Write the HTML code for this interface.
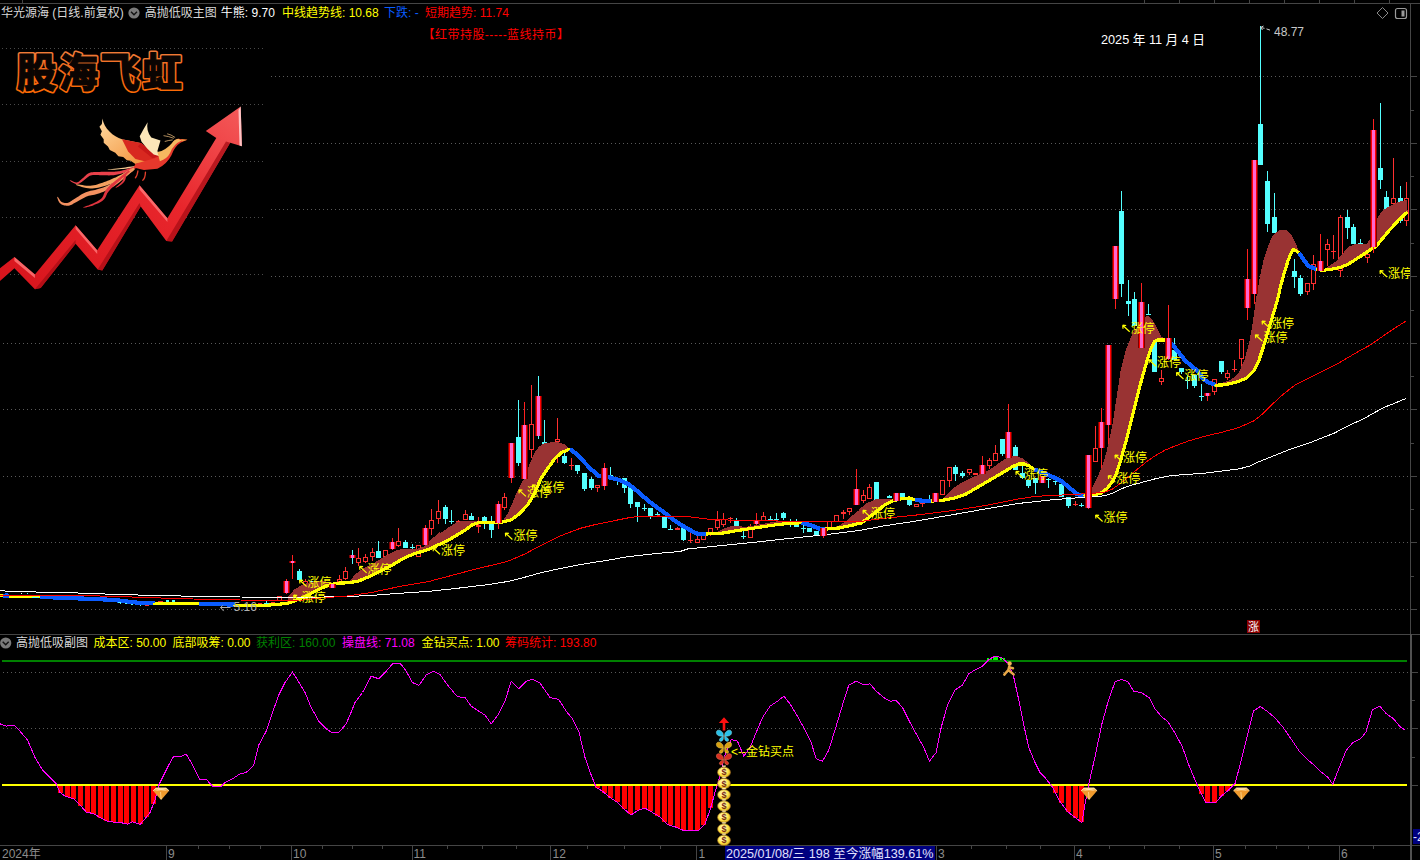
<!DOCTYPE html>
<html><head><meta charset="utf-8"><title>chart</title><style>html,body{margin:0;padding:0;background:#000;width:1420px;height:860px;overflow:hidden}</style></head><body>
<svg width="1420" height="860" viewBox="0 0 1420 860" style="display:block;position:absolute;left:0;top:0">
<defs>
<linearGradient id="pk" x1="0" x2="1" y1="0" y2="0"><stop offset="0" stop-color="#8a0000"/><stop offset=".16" stop-color="#ff0000"/><stop offset=".42" stop-color="#ff66c4"/><stop offset=".58" stop-color="#ff66c4"/><stop offset=".84" stop-color="#ff0000"/><stop offset="1" stop-color="#8a0000"/></linearGradient>
<linearGradient id="og" x1="0" x2="0" y1="0" y2="1"><stop offset="0" stop-color="#f0864a"/><stop offset=".5" stop-color="#f26a1c"/><stop offset="1" stop-color="#ff6a00"/></linearGradient>
<linearGradient id="ar" x1="0" x2="1" y1="1" y2="0"><stop offset="0" stop-color="#d8141c"/><stop offset=".6" stop-color="#e8262c"/><stop offset="1" stop-color="#f45a5a"/></linearGradient>
<linearGradient id="wg" x1="0" x2="1" y1="0" y2="1"><stop offset="0" stop-color="#ffd9a0"/><stop offset="1" stop-color="#f08a30"/></linearGradient>
<radialGradient id="bag" cx=".42" cy=".38" r=".68"><stop offset="0" stop-color="#fffbe6"/><stop offset=".55" stop-color="#ffe84a"/><stop offset="1" stop-color="#d8a010"/></radialGradient>
<linearGradient id="dm" x1="0" x2="0" y1="0" y2="1"><stop offset="0" stop-color="#ffd890"/><stop offset=".3" stop-color="#f0982c"/><stop offset=".8" stop-color="#f0a030"/><stop offset="1" stop-color="#ffd080"/></linearGradient>
</defs>
<rect width="1420" height="860" fill="#000"/>
<g stroke="#5a5a5a" stroke-width="1" stroke-dasharray="1 3" shape-rendering="crispEdges">
<line x1="271" y1="76.5" x2="1409" y2="76.5"/>
<line x1="271" y1="143.5" x2="1409" y2="143.5"/>
<line x1="271" y1="209.5" x2="1409" y2="209.5"/>
<line x1="271" y1="276.5" x2="1409" y2="276.5"/>
<line x1="3" y1="343.5" x2="1409" y2="343.5"/>
<line x1="3" y1="409.5" x2="1409" y2="409.5"/>
<line x1="3" y1="476.5" x2="1409" y2="476.5"/>
<line x1="3" y1="542.5" x2="1409" y2="542.5"/>
<line x1="3" y1="609.5" x2="1409" y2="609.5"/>
<line x1="3" y1="672.5" x2="1409" y2="672.5"/>
<line x1="3" y1="728.5" x2="1409" y2="728.5"/>
<line x1="2" y1="48.5" x2="264" y2="48.5" stroke="#4a4a4a"/>
<line x1="2" y1="104.5" x2="264" y2="104.5" stroke="#4a4a4a"/>
<line x1="2" y1="161.5" x2="264" y2="161.5" stroke="#4a4a4a"/>
<line x1="2" y1="217.5" x2="264" y2="217.5" stroke="#4a4a4a"/>
<line x1="2" y1="274.5" x2="264" y2="274.5" stroke="#4a4a4a"/>
</g>
<g stroke="#454545" stroke-width="1" shape-rendering="crispEdges">
<line x1="0" y1="3.5" x2="1420" y2="3.5"/>
<line x1="0" y1="634.5" x2="1420" y2="634.5"/>
<line x1="0" y1="845.5" x2="1420" y2="845.5"/>
<line x1="1410.5" y1="3" x2="1410.5" y2="634"/>
<line x1="1411" y1="634" x2="1411" y2="860" stroke-width="2" stroke="#505050"/>
<line x1="22.5" y1="0" x2="22.5" y2="3"/>
<line x1="1144.5" y1="0" x2="1144.5" y2="3"/>
<line x1="1179.5" y1="0" x2="1179.5" y2="3"/>
<line x1="1214.5" y1="0" x2="1214.5" y2="3"/>
<line x1="1249.5" y1="0" x2="1249.5" y2="3"/>
<line x1="1284.5" y1="0" x2="1284.5" y2="3"/>
<line x1="1319.5" y1="0" x2="1319.5" y2="3"/>
<line x1="1354.5" y1="0" x2="1354.5" y2="3"/>
<line x1="1389.5" y1="0" x2="1389.5" y2="3"/>
<line x1="1411" y1="76.5" x2="1417" y2="76.5"/>
<line x1="1411" y1="110.5" x2="1414" y2="110.5"/>
<line x1="1411" y1="143.5" x2="1417" y2="143.5"/>
<line x1="1411" y1="176.5" x2="1414" y2="176.5"/>
<line x1="1411" y1="209.5" x2="1417" y2="209.5"/>
<line x1="1411" y1="243.5" x2="1414" y2="243.5"/>
<line x1="1411" y1="276.5" x2="1417" y2="276.5"/>
<line x1="1411" y1="310.5" x2="1414" y2="310.5"/>
<line x1="1411" y1="343.5" x2="1417" y2="343.5"/>
<line x1="1411" y1="376.5" x2="1414" y2="376.5"/>
<line x1="1411" y1="409.5" x2="1417" y2="409.5"/>
<line x1="1411" y1="443.5" x2="1414" y2="443.5"/>
<line x1="1411" y1="476.5" x2="1417" y2="476.5"/>
<line x1="1411" y1="509.5" x2="1414" y2="509.5"/>
<line x1="1411" y1="542.5" x2="1417" y2="542.5"/>
<line x1="1411" y1="576.5" x2="1414" y2="576.5"/>
<line x1="1411" y1="609.5" x2="1417" y2="609.5"/>
<line x1="1412" y1="672.5" x2="1418" y2="672.5"/>
<line x1="1412" y1="700.5" x2="1415" y2="700.5"/>
<line x1="1412" y1="728.5" x2="1418" y2="728.5"/>
<line x1="1412" y1="757.5" x2="1415" y2="757.5"/>
<line x1="1412" y1="785.5" x2="1418" y2="785.5"/>
<line x1="166.5" y1="846" x2="166.5" y2="860"/>
<line x1="291.5" y1="846" x2="291.5" y2="860"/>
<line x1="412.5" y1="846" x2="412.5" y2="860"/>
<line x1="550.5" y1="846" x2="550.5" y2="860"/>
<line x1="696.5" y1="846" x2="696.5" y2="860"/>
<line x1="1074.5" y1="846" x2="1074.5" y2="860"/>
<line x1="1213.5" y1="846" x2="1213.5" y2="860"/>
<line x1="1339.5" y1="846" x2="1339.5" y2="860"/>
<line x1="936.5" y1="846" x2="936.5" y2="860"/>
<line x1="198.5" y1="846" x2="198.5" y2="849"/>
<line x1="229.5" y1="846" x2="229.5" y2="849"/>
<line x1="260.5" y1="846" x2="260.5" y2="849"/>
<line x1="322.5" y1="846" x2="322.5" y2="849"/>
<line x1="352.5" y1="846" x2="352.5" y2="849"/>
<line x1="382.5" y1="846" x2="382.5" y2="849"/>
<line x1="447.5" y1="846" x2="447.5" y2="849"/>
<line x1="482.5" y1="846" x2="482.5" y2="849"/>
<line x1="516.5" y1="846" x2="516.5" y2="849"/>
<line x1="587.5" y1="846" x2="587.5" y2="849"/>
<line x1="624.5" y1="846" x2="624.5" y2="849"/>
<line x1="660.5" y1="846" x2="660.5" y2="849"/>
<line x1="971.5" y1="846" x2="971.5" y2="849"/>
<line x1="1006.5" y1="846" x2="1006.5" y2="849"/>
<line x1="1040.5" y1="846" x2="1040.5" y2="849"/>
<line x1="1109.5" y1="846" x2="1109.5" y2="849"/>
<line x1="1144.5" y1="846" x2="1144.5" y2="849"/>
<line x1="1179.5" y1="846" x2="1179.5" y2="849"/>
<line x1="1245.5" y1="846" x2="1245.5" y2="849"/>
<line x1="1276.5" y1="846" x2="1276.5" y2="849"/>
<line x1="1308.5" y1="846" x2="1308.5" y2="849"/>
<line x1="1373.5" y1="846" x2="1373.5" y2="849"/>
</g>
<g shape-rendering="crispEdges">
<rect x="279" y="596" width="1" height="0" fill="#ff3030"/><rect x="279" y="601" width="1" height="0" fill="#ff3030"/><rect x="277.5" y="596.5" width="4" height="4" fill="#000" stroke="#ff3030" stroke-width="1"/>
<rect x="299" y="569" width="1" height="12" fill="#54ffff"/><rect x="297" y="571" width="5" height="9" fill="#54ffff"/>
<rect x="305" y="579" width="1" height="2" fill="#ff3030"/><rect x="305" y="585" width="1" height="0" fill="#ff3030"/><rect x="303.5" y="581.5" width="4" height="3" fill="#000" stroke="#ff3030" stroke-width="1"/>
<rect x="312" y="581" width="1" height="2" fill="#54ffff"/><rect x="310" y="581" width="5" height="2" fill="#54ffff"/>
<rect x="339" y="575" width="1" height="4" fill="#ff3030"/><rect x="339" y="582" width="1" height="0" fill="#ff3030"/><rect x="337.5" y="579.5" width="4" height="2" fill="#000" stroke="#ff3030" stroke-width="1"/>
<rect x="345" y="567" width="1" height="4" fill="#ff3030"/><rect x="345" y="579" width="1" height="1" fill="#ff3030"/><rect x="343.5" y="571.5" width="4" height="7" fill="#000" stroke="#ff3030" stroke-width="1"/>
<rect x="358" y="548" width="1" height="10" fill="#ff3030"/><rect x="358" y="563" width="1" height="3" fill="#ff3030"/><rect x="356.5" y="558.5" width="4" height="4" fill="#000" stroke="#ff3030" stroke-width="1"/>
<rect x="365" y="554" width="1" height="3" fill="#ff3030"/><rect x="365" y="562" width="1" height="1" fill="#ff3030"/><rect x="363.5" y="557.5" width="4" height="4" fill="#000" stroke="#ff3030" stroke-width="1"/>
<rect x="372" y="548" width="1" height="4" fill="#ff3030"/><rect x="372" y="557" width="1" height="4" fill="#ff3030"/><rect x="370.5" y="552.5" width="4" height="4" fill="#000" stroke="#ff3030" stroke-width="1"/>
<rect x="378" y="541" width="1" height="17" fill="#54ffff"/><rect x="376" y="551" width="5" height="7" fill="#54ffff"/>
<rect x="385" y="550" width="1" height="0" fill="#ff3030"/><rect x="385" y="557" width="1" height="0" fill="#ff3030"/><rect x="383.5" y="550.5" width="4" height="6" fill="#000" stroke="#ff3030" stroke-width="1"/>
<rect x="398" y="528" width="1" height="13" fill="#ff3030"/><rect x="398" y="546" width="1" height="1" fill="#ff3030"/><rect x="396.5" y="541.5" width="4" height="4" fill="#000" stroke="#ff3030" stroke-width="1"/>
<rect x="405" y="540" width="1" height="8" fill="#54ffff"/><rect x="403" y="542" width="5" height="6" fill="#54ffff"/>
<rect x="412" y="544" width="1" height="5" fill="#54ffff"/><rect x="410" y="547" width="5" height="1" fill="#54ffff"/>
<rect x="418" y="545" width="1" height="0" fill="#ff3030"/><rect x="418" y="557" width="1" height="0" fill="#ff3030"/><rect x="416.5" y="545.5" width="4" height="11" fill="#000" stroke="#ff3030" stroke-width="1"/>
<rect x="431" y="509" width="1" height="11" fill="#ff3030"/><rect x="431" y="529" width="1" height="6" fill="#ff3030"/><rect x="429.5" y="520.5" width="4" height="8" fill="#000" stroke="#ff3030" stroke-width="1"/>
<rect x="438" y="500" width="1" height="11" fill="#ff3030"/><rect x="438" y="519" width="1" height="5" fill="#ff3030"/><rect x="436.5" y="511.5" width="4" height="7" fill="#000" stroke="#ff3030" stroke-width="1"/>
<rect x="445" y="505" width="1" height="19" fill="#54ffff"/><rect x="443" y="507" width="5" height="12" fill="#54ffff"/>
<rect x="451" y="510" width="1" height="14" fill="#54ffff"/><rect x="449" y="521" width="5" height="1" fill="#54ffff"/>
<rect x="458" y="520" width="1" height="1" fill="#ff3030"/><rect x="458" y="522" width="1" height="1" fill="#ff3030"/><rect x="456" y="521" width="5" height="1" fill="#ff3030"/>
<rect x="465" y="510" width="1" height="4" fill="#ff3030"/><rect x="465" y="520" width="1" height="0" fill="#ff3030"/><rect x="463.5" y="514.5" width="4" height="5" fill="#000" stroke="#ff3030" stroke-width="1"/>
<rect x="471" y="513" width="1" height="7" fill="#54ffff"/><rect x="469" y="516" width="5" height="4" fill="#54ffff"/>
<rect x="478" y="517" width="1" height="8" fill="#ff3030"/><rect x="478" y="527" width="1" height="6" fill="#ff3030"/><rect x="476" y="525" width="5" height="2" fill="#ff3030"/>
<rect x="484" y="516" width="1" height="13" fill="#54ffff"/><rect x="482" y="517" width="5" height="5" fill="#54ffff"/>
<rect x="491" y="516" width="1" height="22" fill="#54ffff"/><rect x="489" y="522" width="5" height="8" fill="#54ffff"/>
<rect x="504" y="493" width="1" height="4" fill="#ff3030"/><rect x="504" y="508" width="1" height="2" fill="#ff3030"/><rect x="502.5" y="497.5" width="4" height="10" fill="#000" stroke="#ff3030" stroke-width="1"/>
<rect x="518" y="400" width="1" height="66" fill="#54ffff"/><rect x="516" y="437" width="5" height="26" fill="#54ffff"/>
<rect x="531" y="385" width="1" height="39" fill="#ff3030"/><rect x="531" y="450" width="1" height="8" fill="#ff3030"/><rect x="529.5" y="424.5" width="4" height="25" fill="#000" stroke="#ff3030" stroke-width="1"/>
<rect x="544" y="420" width="1" height="24" fill="#54ffff"/><rect x="542" y="442" width="5" height="2" fill="#54ffff"/>
<rect x="557" y="418" width="1" height="21" fill="#ff3030"/><rect x="557" y="442" width="1" height="21" fill="#ff3030"/><rect x="555.5" y="439.5" width="4" height="2" fill="#000" stroke="#ff3030" stroke-width="1"/>
<rect x="564" y="452" width="1" height="12" fill="#54ffff"/><rect x="562" y="456" width="5" height="7" fill="#54ffff"/>
<rect x="571" y="458" width="1" height="7" fill="#ff3030"/><rect x="571" y="466" width="1" height="4" fill="#ff3030"/><rect x="569" y="465" width="5" height="1" fill="#ff3030"/>
<rect x="577" y="465" width="1" height="9" fill="#54ffff"/><rect x="575" y="465" width="5" height="6" fill="#54ffff"/>
<rect x="584" y="473" width="1" height="18" fill="#54ffff"/><rect x="582" y="473" width="5" height="16" fill="#54ffff"/>
<rect x="591" y="477" width="1" height="13" fill="#54ffff"/><rect x="589" y="479" width="5" height="9" fill="#54ffff"/>
<rect x="597" y="485" width="1" height="0" fill="#ff3030"/><rect x="597" y="488" width="1" height="4" fill="#ff3030"/><rect x="595.5" y="485.5" width="4" height="2" fill="#000" stroke="#ff3030" stroke-width="1"/>
<rect x="610" y="467" width="1" height="10" fill="#54ffff"/><rect x="608" y="475" width="5" height="1" fill="#54ffff"/>
<rect x="617" y="477" width="1" height="8" fill="#54ffff"/><rect x="615" y="478" width="5" height="3" fill="#54ffff"/>
<rect x="624" y="478" width="1" height="15" fill="#54ffff"/><rect x="622" y="478" width="5" height="10" fill="#54ffff"/>
<rect x="630" y="487" width="1" height="21" fill="#54ffff"/><rect x="628" y="487" width="5" height="17" fill="#54ffff"/>
<rect x="637" y="502" width="1" height="20" fill="#54ffff"/><rect x="635" y="502" width="5" height="5" fill="#54ffff"/>
<rect x="644" y="504" width="1" height="7" fill="#54ffff"/><rect x="642" y="508" width="5" height="1" fill="#54ffff"/>
<rect x="650" y="508" width="1" height="11" fill="#54ffff"/><rect x="648" y="508" width="5" height="8" fill="#54ffff"/>
<rect x="657" y="512" width="1" height="5" fill="#54ffff"/><rect x="655" y="514" width="5" height="1" fill="#54ffff"/>
<rect x="664" y="517" width="1" height="11" fill="#54ffff"/><rect x="662" y="517" width="5" height="11" fill="#54ffff"/>
<rect x="670" y="525" width="1" height="5" fill="#54ffff"/><rect x="668" y="529" width="5" height="1" fill="#54ffff"/>
<rect x="677" y="527" width="1" height="1" fill="#ff3030"/><rect x="677" y="530" width="1" height="0" fill="#ff3030"/><rect x="675" y="528" width="5" height="2" fill="#ff3030"/>
<rect x="683" y="528" width="1" height="13" fill="#54ffff"/><rect x="681" y="528" width="5" height="12" fill="#54ffff"/>
<rect x="690" y="533" width="1" height="7" fill="#ff3030"/><rect x="690" y="541" width="1" height="2" fill="#ff3030"/><rect x="688" y="540" width="5" height="1" fill="#ff3030"/>
<rect x="697" y="536" width="1" height="3" fill="#ff3030"/><rect x="697" y="543" width="1" height="0" fill="#ff3030"/><rect x="695.5" y="539.5" width="4" height="3" fill="#000" stroke="#ff3030" stroke-width="1"/>
<rect x="703" y="535" width="1" height="0" fill="#ff3030"/><rect x="703" y="540" width="1" height="0" fill="#ff3030"/><rect x="701.5" y="535.5" width="4" height="4" fill="#000" stroke="#ff3030" stroke-width="1"/>
<rect x="710" y="528" width="1" height="0" fill="#ff3030"/><rect x="710" y="533" width="1" height="3" fill="#ff3030"/><rect x="708.5" y="528.5" width="4" height="4" fill="#000" stroke="#ff3030" stroke-width="1"/>
<rect x="717" y="511" width="1" height="9" fill="#ff3030"/><rect x="717" y="528" width="1" height="2" fill="#ff3030"/><rect x="715.5" y="520.5" width="4" height="7" fill="#000" stroke="#ff3030" stroke-width="1"/>
<rect x="723" y="513" width="1" height="6" fill="#ff3030"/><rect x="723" y="525" width="1" height="2" fill="#ff3030"/><rect x="721.5" y="519.5" width="4" height="5" fill="#000" stroke="#ff3030" stroke-width="1"/>
<rect x="730" y="517" width="1" height="1" fill="#ff3030"/><rect x="730" y="519" width="1" height="4" fill="#ff3030"/><rect x="728" y="518" width="5" height="1" fill="#ff3030"/>
<rect x="736" y="518" width="1" height="8" fill="#54ffff"/><rect x="734" y="521" width="5" height="5" fill="#54ffff"/>
<rect x="743" y="531" width="1" height="8" fill="#54ffff"/><rect x="741" y="536" width="5" height="1" fill="#54ffff"/>
<rect x="750" y="524" width="1" height="2" fill="#ff3030"/><rect x="750" y="538" width="1" height="0" fill="#ff3030"/><rect x="748.5" y="526.5" width="4" height="11" fill="#000" stroke="#ff3030" stroke-width="1"/>
<rect x="763" y="512" width="1" height="4" fill="#ff3030"/><rect x="763" y="521" width="1" height="0" fill="#ff3030"/><rect x="761.5" y="516.5" width="4" height="4" fill="#000" stroke="#ff3030" stroke-width="1"/>
<rect x="770" y="516" width="1" height="4" fill="#54ffff"/><rect x="768" y="519" width="5" height="1" fill="#54ffff"/>
<rect x="776" y="513" width="1" height="7" fill="#54ffff"/><rect x="774" y="519" width="5" height="1" fill="#54ffff"/>
<rect x="783" y="512" width="1" height="8" fill="#54ffff"/><rect x="781" y="513" width="5" height="5" fill="#54ffff"/>
<rect x="790" y="519" width="1" height="8" fill="#54ffff"/><rect x="788" y="522" width="5" height="1" fill="#54ffff"/>
<rect x="796" y="519" width="1" height="8" fill="#54ffff"/><rect x="794" y="524" width="5" height="3" fill="#54ffff"/>
<rect x="803" y="525" width="1" height="8" fill="#54ffff"/><rect x="801" y="528" width="5" height="1" fill="#54ffff"/>
<rect x="809" y="528" width="1" height="4" fill="#54ffff"/><rect x="807" y="528" width="5" height="4" fill="#54ffff"/>
<rect x="816" y="531" width="1" height="5" fill="#54ffff"/><rect x="814" y="531" width="5" height="5" fill="#54ffff"/>
<rect x="829" y="521" width="1" height="0" fill="#ff3030"/><rect x="829" y="528" width="1" height="0" fill="#ff3030"/><rect x="827.5" y="521.5" width="4" height="6" fill="#000" stroke="#ff3030" stroke-width="1"/>
<rect x="836" y="515" width="1" height="0" fill="#ff3030"/><rect x="836" y="522" width="1" height="0" fill="#ff3030"/><rect x="834.5" y="515.5" width="4" height="6" fill="#000" stroke="#ff3030" stroke-width="1"/>
<rect x="843" y="510" width="1" height="2" fill="#ff3030"/><rect x="843" y="514" width="1" height="5" fill="#ff3030"/><rect x="841" y="512" width="5" height="2" fill="#ff3030"/>
<rect x="849" y="508" width="1" height="0" fill="#ff3030"/><rect x="849" y="512" width="1" height="3" fill="#ff3030"/><rect x="847.5" y="508.5" width="4" height="3" fill="#000" stroke="#ff3030" stroke-width="1"/>
<rect x="863" y="490" width="1" height="5" fill="#ff3030"/><rect x="863" y="501" width="1" height="2" fill="#ff3030"/><rect x="861.5" y="495.5" width="4" height="5" fill="#000" stroke="#ff3030" stroke-width="1"/>
<rect x="869" y="484" width="1" height="3" fill="#ff3030"/><rect x="869" y="499" width="1" height="0" fill="#ff3030"/><rect x="867.5" y="487.5" width="4" height="11" fill="#000" stroke="#ff3030" stroke-width="1"/>
<rect x="876" y="482" width="1" height="18" fill="#54ffff"/><rect x="874" y="482" width="5" height="18" fill="#54ffff"/>
<rect x="889" y="495" width="1" height="3" fill="#54ffff"/><rect x="887" y="496" width="5" height="2" fill="#54ffff"/>
<rect x="902" y="493" width="1" height="4" fill="#54ffff"/><rect x="900" y="493" width="5" height="4" fill="#54ffff"/>
<rect x="909" y="500" width="1" height="6" fill="#54ffff"/><rect x="907" y="500" width="5" height="5" fill="#54ffff"/>
<rect x="916" y="504" width="1" height="0" fill="#ff3030"/><rect x="916" y="507" width="1" height="0" fill="#ff3030"/><rect x="914.5" y="504.5" width="4" height="2" fill="#000" stroke="#ff3030" stroke-width="1"/>
<rect x="922" y="501" width="1" height="2" fill="#ff3030"/><rect x="922" y="504" width="1" height="3" fill="#ff3030"/><rect x="920" y="503" width="5" height="1" fill="#ff3030"/>
<rect x="929" y="495" width="1" height="5" fill="#54ffff"/><rect x="927" y="499" width="5" height="1" fill="#54ffff"/>
<rect x="942" y="480" width="1" height="0" fill="#ff3030"/><rect x="942" y="495" width="1" height="0" fill="#ff3030"/><rect x="940.5" y="480.5" width="4" height="14" fill="#000" stroke="#ff3030" stroke-width="1"/>
<rect x="949" y="467" width="1" height="0" fill="#ff3030"/><rect x="949" y="481" width="1" height="6" fill="#ff3030"/><rect x="947.5" y="467.5" width="4" height="13" fill="#000" stroke="#ff3030" stroke-width="1"/>
<rect x="955" y="465" width="1" height="16" fill="#54ffff"/><rect x="953" y="467" width="5" height="7" fill="#54ffff"/>
<rect x="962" y="471" width="1" height="7" fill="#54ffff"/><rect x="960" y="473" width="5" height="3" fill="#54ffff"/>
<rect x="969" y="469" width="1" height="0" fill="#ff3030"/><rect x="969" y="473" width="1" height="2" fill="#ff3030"/><rect x="967.5" y="469.5" width="4" height="3" fill="#000" stroke="#ff3030" stroke-width="1"/>
<rect x="975" y="473" width="1" height="0" fill="#ff3030"/><rect x="975" y="475" width="1" height="0" fill="#ff3030"/><rect x="973" y="473" width="5" height="2" fill="#ff3030"/>
<rect x="989" y="458" width="1" height="2" fill="#ff3030"/><rect x="989" y="466" width="1" height="3" fill="#ff3030"/><rect x="987.5" y="460.5" width="4" height="5" fill="#000" stroke="#ff3030" stroke-width="1"/>
<rect x="995" y="445" width="1" height="8" fill="#ff3030"/><rect x="995" y="461" width="1" height="0" fill="#ff3030"/><rect x="993.5" y="453.5" width="4" height="7" fill="#000" stroke="#ff3030" stroke-width="1"/>
<rect x="1002" y="439" width="1" height="17" fill="#54ffff"/><rect x="1000" y="439" width="5" height="15" fill="#54ffff"/>
<rect x="1015" y="445" width="1" height="25" fill="#54ffff"/><rect x="1013" y="447" width="5" height="23" fill="#54ffff"/>
<rect x="1022" y="465" width="1" height="14" fill="#54ffff"/><rect x="1020" y="473" width="5" height="5" fill="#54ffff"/>
<rect x="1028" y="480" width="1" height="8" fill="#54ffff"/><rect x="1026" y="480" width="5" height="6" fill="#54ffff"/>
<rect x="1035" y="478" width="1" height="16" fill="#54ffff"/><rect x="1033" y="478" width="5" height="5" fill="#54ffff"/>
<rect x="1048" y="478" width="1" height="10" fill="#54ffff"/><rect x="1046" y="479" width="5" height="1" fill="#54ffff"/>
<rect x="1055" y="481" width="1" height="4" fill="#54ffff"/><rect x="1053" y="481" width="5" height="1" fill="#54ffff"/>
<rect x="1061" y="484" width="1" height="13" fill="#54ffff"/><rect x="1059" y="484" width="5" height="13" fill="#54ffff"/>
<rect x="1068" y="497" width="1" height="11" fill="#54ffff"/><rect x="1066" y="497" width="5" height="9" fill="#54ffff"/>
<rect x="1075" y="501" width="1" height="3" fill="#ff3030"/><rect x="1075" y="505" width="1" height="1" fill="#ff3030"/><rect x="1073" y="504" width="5" height="1" fill="#ff3030"/>
<rect x="1081" y="503" width="1" height="4" fill="#54ffff"/><rect x="1079" y="505" width="5" height="1" fill="#54ffff"/>
<rect x="1095" y="426" width="1" height="22" fill="#ff3030"/><rect x="1095" y="462" width="1" height="0" fill="#ff3030"/><rect x="1093.5" y="448.5" width="4" height="13" fill="#000" stroke="#ff3030" stroke-width="1"/>
<rect x="1121" y="191" width="1" height="106" fill="#54ffff"/><rect x="1119" y="211" width="5" height="73" fill="#54ffff"/>
<rect x="1128" y="280" width="1" height="36" fill="#54ffff"/><rect x="1126" y="301" width="5" height="3" fill="#54ffff"/>
<rect x="1134" y="292" width="1" height="34" fill="#54ffff"/><rect x="1132" y="299" width="5" height="27" fill="#54ffff"/>
<rect x="1148" y="304" width="1" height="11" fill="#54ffff"/><rect x="1146" y="314" width="5" height="1" fill="#54ffff"/>
<rect x="1154" y="342" width="1" height="30" fill="#54ffff"/><rect x="1152" y="342" width="5" height="30" fill="#54ffff"/>
<rect x="1161" y="370" width="1" height="8" fill="#ff3030"/><rect x="1161" y="382" width="1" height="3" fill="#ff3030"/><rect x="1159.5" y="378.5" width="4" height="3" fill="#000" stroke="#ff3030" stroke-width="1"/>
<rect x="1174" y="338" width="1" height="22" fill="#54ffff"/><rect x="1172" y="350" width="5" height="10" fill="#54ffff"/>
<rect x="1181" y="368" width="1" height="6" fill="#54ffff"/><rect x="1179" y="368" width="5" height="4" fill="#54ffff"/>
<rect x="1187" y="375" width="1" height="14" fill="#54ffff"/><rect x="1185" y="380" width="5" height="1" fill="#54ffff"/>
<rect x="1194" y="375" width="1" height="13" fill="#54ffff"/><rect x="1192" y="375" width="5" height="11" fill="#54ffff"/>
<rect x="1201" y="384" width="1" height="17" fill="#54ffff"/><rect x="1199" y="396" width="5" height="1" fill="#54ffff"/>
<rect x="1214" y="379" width="1" height="0" fill="#ff3030"/><rect x="1214" y="392" width="1" height="3" fill="#ff3030"/><rect x="1212.5" y="379.5" width="4" height="12" fill="#000" stroke="#ff3030" stroke-width="1"/>
<rect x="1221" y="361" width="1" height="13" fill="#54ffff"/><rect x="1219" y="361" width="5" height="11" fill="#54ffff"/>
<rect x="1227" y="370" width="1" height="3" fill="#ff3030"/><rect x="1227" y="378" width="1" height="2" fill="#ff3030"/><rect x="1225.5" y="373.5" width="4" height="4" fill="#000" stroke="#ff3030" stroke-width="1"/>
<rect x="1234" y="360" width="1" height="9" fill="#ff3030"/><rect x="1234" y="370" width="1" height="2" fill="#ff3030"/><rect x="1232" y="369" width="5" height="1" fill="#ff3030"/>
<rect x="1241" y="339" width="1" height="0" fill="#ff3030"/><rect x="1241" y="359" width="1" height="11" fill="#ff3030"/><rect x="1239.5" y="339.5" width="4" height="19" fill="#000" stroke="#ff3030" stroke-width="1"/>
<rect x="1260" y="26" width="1" height="139" fill="#54ffff"/><rect x="1258" y="124" width="5" height="41" fill="#54ffff"/>
<rect x="1267" y="171" width="1" height="61" fill="#54ffff"/><rect x="1265" y="181" width="5" height="43" fill="#54ffff"/>
<rect x="1274" y="193" width="1" height="40" fill="#54ffff"/><rect x="1272" y="217" width="5" height="16" fill="#54ffff"/>
<rect x="1294" y="259" width="1" height="29" fill="#54ffff"/><rect x="1292" y="271" width="5" height="6" fill="#54ffff"/>
<rect x="1300" y="275" width="1" height="21" fill="#54ffff"/><rect x="1298" y="278" width="5" height="16" fill="#54ffff"/>
<rect x="1307" y="283" width="1" height="0" fill="#ff3030"/><rect x="1307" y="292" width="1" height="3" fill="#ff3030"/><rect x="1305.5" y="283.5" width="4" height="8" fill="#000" stroke="#ff3030" stroke-width="1"/>
<rect x="1313" y="255" width="1" height="9" fill="#ff3030"/><rect x="1313" y="284" width="1" height="6" fill="#ff3030"/><rect x="1311.5" y="264.5" width="4" height="19" fill="#000" stroke="#ff3030" stroke-width="1"/>
<rect x="1327" y="239" width="1" height="5" fill="#ff3030"/><rect x="1327" y="250" width="1" height="16" fill="#ff3030"/><rect x="1325.5" y="244.5" width="4" height="5" fill="#000" stroke="#ff3030" stroke-width="1"/>
<rect x="1333" y="235" width="1" height="16" fill="#ff3030"/><rect x="1333" y="252" width="1" height="7" fill="#ff3030"/><rect x="1331" y="251" width="5" height="1" fill="#ff3030"/>
<rect x="1340" y="215" width="1" height="2" fill="#ff3030"/><rect x="1340" y="271" width="1" height="6" fill="#ff3030"/><rect x="1338.5" y="217.5" width="4" height="53" fill="#000" stroke="#ff3030" stroke-width="1"/>
<rect x="1347" y="210" width="1" height="29" fill="#54ffff"/><rect x="1345" y="217" width="5" height="11" fill="#54ffff"/>
<rect x="1353" y="224" width="1" height="20" fill="#54ffff"/><rect x="1351" y="227" width="5" height="17" fill="#54ffff"/>
<rect x="1360" y="239" width="1" height="5" fill="#54ffff"/><rect x="1358" y="243" width="5" height="1" fill="#54ffff"/>
<rect x="1367" y="254" width="1" height="0" fill="#ff3030"/><rect x="1367" y="258" width="1" height="5" fill="#ff3030"/><rect x="1365.5" y="254.5" width="4" height="3" fill="#000" stroke="#ff3030" stroke-width="1"/>
<rect x="1380" y="103" width="1" height="86" fill="#54ffff"/><rect x="1378" y="168" width="5" height="12" fill="#54ffff"/>
<rect x="1386" y="191" width="1" height="18" fill="#54ffff"/><rect x="1384" y="197" width="5" height="12" fill="#54ffff"/>
<rect x="1393" y="158" width="1" height="40" fill="#ff3030"/><rect x="1393" y="204" width="1" height="0" fill="#ff3030"/><rect x="1391.5" y="198.5" width="4" height="5" fill="#000" stroke="#ff3030" stroke-width="1"/>
<rect x="1400" y="186" width="1" height="37" fill="#54ffff"/><rect x="1398" y="198" width="5" height="23" fill="#54ffff"/>
<rect x="1406" y="182" width="1" height="16" fill="#ff3030"/><rect x="1406" y="221" width="1" height="5" fill="#ff3030"/><rect x="1404.5" y="198.5" width="4" height="22" fill="#000" stroke="#ff3030" stroke-width="1"/>
</g>
<polygon fill="#993333" shape-rendering="crispEdges" points="286.6,603.4 288.3,596.3 294.2,589.6 301.0,585.3 307.7,582.8 314.5,581.1 324.6,581.1 331.4,582.8 335.6,583.3 335.6,583.4 328.0,585.3 317.9,589.6 306.1,596.3 297.6,599.7 287.5,603.4 286.6,603.5"/>
<polygon fill="#993333" shape-rendering="crispEdges" points="348.3,582.8 355.1,574.4 361.8,569.3 370.3,565.1 378.7,560.0 387.2,554.9 395.6,550.7 404.1,548.5 409.1,548.5 415.9,549.0 424.4,546.5 432.8,538.0 439.6,532.1 440.0,533.4 448.5,527.5 456.9,522.1 465.4,520.7 473.8,520.7 478.9,521.5 482.3,522.4 482.3,522.4 478.9,522.4 472.1,524.9 465.4,530.0 456.9,535.1 448.5,540.1 440.0,544.4 439.9,543.9 432.8,547.7 424.4,550.7 415.9,553.2 409.1,555.8 400.7,560.0 392.2,565.1 382.1,570.1 370.3,576.1 358.4,581.1 348.3,582.8"/>
<polygon fill="#993333" shape-rendering="crispEdges" points="501.7,522.4 507.6,513.9 512.7,502.1 517.7,490.3 524.2,478.3 529.3,464.8 534.4,453.0 539.4,446.2 544.5,443.2 551.3,442.3 558.0,442.0 564.8,444.5 569.9,448.7 569.9,449.1 561.4,452.6 554.6,458.9 547.9,468.2 541.1,478.3 534.4,493.5 527.6,505.0 526.2,506.3 519.4,513.9 511.0,519.9 501.7,522.2"/>
<polygon fill="#993333" shape-rendering="crispEdges" points="714.6,533.5 721.4,529.6 729.9,526.5 738.3,526.2 746.8,527.0 755.2,525.3 763.7,523.7 772.1,522.0 780.6,520.8 789.0,521.1 795.8,522.6 795.8,523.0 789.0,523.3 772.1,525.3 755.2,527.9 738.3,530.4 721.4,533.3 714.6,533.6"/>
<polygon fill="#993333" shape-rendering="crispEdges" points="831.3,528.2 839.7,525.3 848.2,519.4 856.6,511.8 860.0,510.1 858.5,509.9 866.9,503.1 875.4,499.4 883.8,498.9 892.3,498.9 900.7,498.0 907.5,498.0 907.5,498.2 900.7,498.9 892.3,501.1 883.8,505.6 875.4,512.4 866.9,519.1 860.0,522.8 860.0,523.7 853.2,525.0 839.7,527.9 831.3,528.6"/>
<polygon fill="#993333" shape-rendering="crispEdges" points="941.3,500.2 948.0,493.0 954.8,487.0 961.5,482.8 968.3,479.4 975.1,476.1 981.8,473.5 988.6,470.1 995.3,465.9 1002.1,460.8 1008.9,456.6 1015.6,455.8 1022.4,458.3 1029.1,463.4 1034.2,469.0 1034.2,469.3 1029.1,465.9 1024.1,463.9 1019.0,463.9 1012.2,466.8 1005.5,471.0 995.3,476.9 985.2,482.8 975.1,488.7 964.9,494.6 954.8,498.0 943.0,500.2 941.3,500.3"/>
<polygon fill="#993333" shape-rendering="crispEdges" points="1090.3,495.4 1092.0,488.3 1097.0,478.2 1102.1,466.3 1106.3,452.8 1109.7,437.6 1113.1,420.7 1115.6,403.8 1118.2,386.9 1120.7,370.0 1125.8,350.1 1132.5,333.2 1141.0,321.3 1146.9,315.4 1151.1,318.0 1156.2,326.4 1161.3,336.5 1165.5,339.9 1165.5,339.9 1157.9,339.9 1154.5,341.6 1151.1,348.4 1147.7,358.5 1144.4,370.0 1140.1,385.2 1136.8,398.7 1133.4,412.3 1130.0,425.8 1126.6,439.3 1123.2,451.1 1119.9,463.0 1116.5,473.1 1112.3,481.5 1107.2,488.3 1100.4,493.4 1092.0,495.4 1090.3,495.5"/>
<polygon fill="#993333" shape-rendering="crispEdges" points="1216.3,384.9 1231.0,379.8 1238.7,372.8 1244.9,358.9 1249.6,340.3 1252.7,323.2 1255.8,300.0 1259.6,278.5 1263.5,259.9 1268.2,245.9 1272.8,235.1 1279.0,230.4 1286.8,230.1 1291.4,235.1 1296.1,244.4 1299.2,252.1 1299.2,252.9 1293.7,249.3 1291.4,252.1 1288.3,259.9 1284.4,272.3 1280.6,286.2 1277.5,300.0 1272.8,315.5 1268.2,331.0 1263.5,346.5 1258.9,360.4 1254.2,370.5 1246.5,378.2 1238.7,381.3 1231.0,383.4 1223.2,384.9 1216.3,385.2"/>
<polygon fill="#993333" shape-rendering="crispEdges" points="1324.7,270.2 1328.6,266.1 1336.3,261.4 1342.5,253.7 1348.7,246.7 1354.9,244.1 1367.3,243.6 1370.4,238.2 1376.6,219.6 1381.3,211.8 1387.5,207.2 1395.2,203.3 1401.4,201.0 1406.8,200.2 1407.6,211.5 1407.6,211.8 1398.3,220.4 1390.6,228.9 1382.8,238.2 1375.8,246.7 1370.4,249.8 1362.7,254.9 1354.9,259.9 1347.2,264.8 1339.4,267.6 1331.7,269.2 1324.7,270.1"/>
<polyline fill="none" stroke="#ffff00" stroke-width="3.2" stroke-linejoin="round" shape-rendering="crispEdges" points="0.0,595.8 3.0,595.8 3.0,596.0"/>
<polyline fill="none" stroke="#0a5cff" stroke-width="4.2" stroke-linejoin="round" shape-rendering="crispEdges" points="3.0,596.0 8.8,596.1"/>
<polyline fill="none" stroke="#ffff00" stroke-width="3.2" stroke-linejoin="round" shape-rendering="crispEdges" points="8.8,596.1 40.1,596.6 40.0,596.6"/>
<polyline fill="none" stroke="#0a5cff" stroke-width="4.2" stroke-linejoin="round" shape-rendering="crispEdges" points="40.0,596.6 55.8,597.6 81.0,598.5 100.0,599.2 113.0,600.0 124.0,601.0 131.0,602.0 140.0,602.9 154.6,603.3"/>
<polyline fill="none" stroke="#ffff00" stroke-width="3.2" stroke-linejoin="round" shape-rendering="crispEdges" points="154.6,603.3 154.6,603.4 199.1,603.4 199.1,603.7"/>
<polyline fill="none" stroke="#0a5cff" stroke-width="4.2" stroke-linejoin="round" shape-rendering="crispEdges" points="199.1,603.7 234.9,604.6"/>
<polyline fill="none" stroke="#ffff00" stroke-width="3.2" stroke-linejoin="round" shape-rendering="crispEdges" points="234.9,604.6 235.1,605.3 246.9,605.6 268.9,605.1 287.5,603.4 297.6,599.7 306.1,596.3 317.9,589.6 328.0,585.3 336.5,583.2 348.3,582.8 358.4,581.1 370.3,576.1 382.1,570.1 392.2,565.1 400.7,560.0 409.1,555.8 415.9,553.2 424.4,550.7 432.8,547.7 439.9,543.9"/>
<polyline fill="none" stroke="#ffff00" stroke-width="3.2" stroke-linejoin="round" shape-rendering="crispEdges" points="439.9,543.9 440.0,544.4 448.5,540.1 456.9,535.1 465.4,530.0 472.1,524.9 478.9,522.4 490.7,522.4 500.8,522.4 511.0,519.9 519.4,513.9 526.2,506.3"/>
<polyline fill="none" stroke="#ffff00" stroke-width="3.2" stroke-linejoin="round" shape-rendering="crispEdges" points="526.2,506.3 527.6,505.0 534.4,493.5 541.1,478.3 547.9,468.2 554.6,458.9 561.4,452.6 569.9,449.1"/>
<polyline fill="none" stroke="#0a5cff" stroke-width="4.2" stroke-linejoin="round" shape-rendering="crispEdges" points="569.9,449.1 578.3,455.5 585.1,463.1 591.8,469.9 598.6,475.8 607.0,476.6 615.5,479.1"/>
<polyline fill="none" stroke="#0a5cff" stroke-width="4.2" stroke-linejoin="round" shape-rendering="crispEdges" points="615.5,479.1 620.0,480.2 628.5,484.3 636.9,490.7 645.4,498.3 653.8,505.1 662.3,511.0 670.7,517.7 679.2,523.7 687.6,528.7 696.1,533.3 699.4,534.0 706.2,534.0"/>
<polyline fill="none" stroke="#ffff00" stroke-width="3.2" stroke-linejoin="round" shape-rendering="crispEdges" points="706.2,534.0 721.4,533.3 738.3,530.4 755.2,527.9 772.1,525.3 789.0,523.3 801.7,522.8"/>
<polyline fill="none" stroke="#0a5cff" stroke-width="4.2" stroke-linejoin="round" shape-rendering="crispEdges" points="801.7,522.8 811.0,525.3 819.4,528.7 825.3,529.1"/>
<polyline fill="none" stroke="#ffff00" stroke-width="3.2" stroke-linejoin="round" shape-rendering="crispEdges" points="825.3,529.1 839.7,527.9 853.2,525.0 860.0,522.8"/>
<polyline fill="none" stroke="#ffff00" stroke-width="3.2" stroke-linejoin="round" shape-rendering="crispEdges" points="860.0,522.8 860.0,523.7 866.9,519.1 875.4,512.4 883.8,505.6 892.3,501.1 900.7,498.9 909.2,498.0 915.1,499.7 915.1,500.2"/>
<polyline fill="none" stroke="#0a5cff" stroke-width="4.2" stroke-linejoin="round" shape-rendering="crispEdges" points="915.1,500.2 931.1,501.1"/>
<polyline fill="none" stroke="#ffff00" stroke-width="3.2" stroke-linejoin="round" shape-rendering="crispEdges" points="931.1,501.1 943.0,500.2 954.8,498.0 964.9,494.6 975.1,488.7 985.2,482.8 995.3,476.9 1005.5,471.0 1012.2,466.8 1019.0,463.9 1024.1,463.9 1029.1,465.9 1034.2,469.3"/>
<polyline fill="none" stroke="#0a5cff" stroke-width="4.2" stroke-linejoin="round" shape-rendering="crispEdges" points="1034.2,469.3 1042.7,472.7 1052.8,476.9 1061.3,481.1 1069.7,487.9 1076.5,493.8 1084.1,496.7"/>
<polyline fill="none" stroke="#ffff00" stroke-width="3.2" stroke-linejoin="round" shape-rendering="crispEdges" points="1084.1,496.7 1085.2,495.9 1092.0,495.4 1100.4,493.4 1107.2,488.3 1112.3,481.5 1116.5,473.1 1119.9,463.0 1123.2,451.1 1126.6,439.3 1130.0,425.8 1133.4,412.3 1136.8,398.7 1140.1,385.2 1144.4,370.0"/>
<polyline fill="none" stroke="#ffff00" stroke-width="3.2" stroke-linejoin="round" shape-rendering="crispEdges" points="1144.4,370.0 1147.7,358.5 1151.1,348.4 1154.5,341.6 1157.9,339.9 1167.2,339.9 1171.4,343.3"/>
<polyline fill="none" stroke="#0a5cff" stroke-width="4.2" stroke-linejoin="round" shape-rendering="crispEdges" points="1171.4,343.3 1178.2,351.8 1184.9,360.2 1193.4,367.8 1196.8,370.0"/>
<polyline fill="none" stroke="#0a5cff" stroke-width="4.2" stroke-linejoin="round" shape-rendering="crispEdges" points="1196.8,370.0 1203.1,379.0 1209.3,382.9 1215.5,384.9"/>
<polyline fill="none" stroke="#ffff00" stroke-width="3.2" stroke-linejoin="round" shape-rendering="crispEdges" points="1215.5,384.9 1215.5,385.2 1223.2,384.9 1231.0,383.4 1238.7,381.3 1246.5,378.2 1254.2,370.5 1258.9,360.4 1263.5,346.5 1268.2,331.0 1272.8,315.5 1277.5,300.0"/>
<polyline fill="none" stroke="#ffff00" stroke-width="3.2" stroke-linejoin="round" shape-rendering="crispEdges" points="1277.5,300.0 1280.6,286.2 1284.4,272.3 1288.3,259.9 1291.4,252.1 1293.7,249.3 1299.2,252.9"/>
<polyline fill="none" stroke="#0a5cff" stroke-width="4.2" stroke-linejoin="round" shape-rendering="crispEdges" points="1299.2,252.9 1303.8,259.9 1308.5,266.1 1316.2,269.2"/>
<polyline fill="none" stroke="#ffff00" stroke-width="3.2" stroke-linejoin="round" shape-rendering="crispEdges" points="1316.2,269.2 1322.4,270.4 1331.7,269.2 1339.4,267.6 1347.2,264.8 1354.9,259.9 1362.7,254.9 1370.4,249.8 1375.8,246.7 1382.8,238.2 1390.6,228.9 1398.3,220.4 1407.6,211.8"/>
<polyline fill="none" stroke="#ffffff" stroke-width="1" shape-rendering="crispEdges" points="0.0,590.5 10.0,591.5 51.0,592.3 78.0,593.0 118.0,594.5 157.0,595.5 204.0,596.5 240.0,597.0 300.0,597.5 349.0,596.5 370.0,595.5 399.6,593.3 429.2,591.3 454.5,588.6 490.0,584.4 507.6,581.5 524.5,577.3 541.4,572.6 558.3,568.9 575.2,565.5 592.1,562.6 609.0,560.1 625.9,557.0 642.8,555.0 659.7,553.2 680.0,551.5 687.6,549.0 721.4,545.6 755.2,542.2 789.0,538.5 822.8,535.0 860.0,530.4 883.8,525.9 917.6,520.8 951.4,514.9 985.2,509.0 1019.0,503.4 1052.8,499.7 1070.0,498.4 1103.8,495.9 1112.3,493.4 1120.7,489.1 1129.2,485.8 1137.6,483.6 1154.5,479.0 1171.4,475.6 1205.2,473.1 1239.0,468.9 1249.1,466.3 1255.9,463.0 1272.8,456.2 1289.7,449.4 1310.0,442.7 1334.8,432.9 1348.7,425.5 1362.7,419.3 1375.1,412.3 1384.4,407.2 1395.2,403.0 1406.1,398.4"/>
<polyline fill="none" stroke="#ff0000" stroke-width="1" shape-rendering="crispEdges" points="0.0,595.0 50.0,595.0 105.0,596.1 135.0,597.1 170.0,598.3 210.0,599.5 240.0,600.0 270.0,600.4 300.0,600.4 325.8,597.5 336.0,596.9 349.0,595.8 362.0,593.9 370.0,592.8 399.6,586.5 429.2,581.4 454.5,574.7 473.8,569.5 490.7,565.5 507.6,561.3 524.5,554.2 541.4,545.2 558.3,536.8 566.8,533.4 580.3,528.3 597.2,524.1 614.1,520.7 631.0,517.3 642.8,516.1 659.7,516.0 680.0,516.5 687.6,516.6 696.1,517.7 707.9,519.1 721.4,519.8 755.2,520.8 789.0,521.1 822.8,521.6 860.0,521.6 883.8,518.3 917.6,514.9 951.4,510.7 985.2,505.6 1019.0,498.9 1035.9,496.3 1052.8,495.5 1069.7,494.6 1070.0,494.7 1103.8,492.5 1112.3,489.1 1120.7,483.2 1129.2,476.5 1137.6,468.9 1146.1,462.1 1154.5,456.2 1164.6,450.3 1174.8,446.1 1188.3,441.0 1205.2,436.2 1222.1,432.2 1239.0,427.5 1254.2,420.7 1262.7,413.9 1272.8,403.8 1282.9,394.5 1294.8,385.2 1310.0,377.5 1323.9,370.5 1339.4,362.7 1354.9,353.5 1370.4,344.9 1385.9,334.1 1395.2,327.9 1406.1,320.9"/>
<g shape-rendering="crispEdges">
<rect x="286" y="579" width="1" height="15" fill="#ff2020"/><rect x="283" y="581" width="7" height="12" fill="#7c0000"/><rect x="284" y="581" width="5" height="12" fill="#ff0000"/><rect x="285" y="581" width="3" height="12" fill="#ff66cc"/>
<rect x="292" y="555" width="1" height="24" fill="#ff2020"/><rect x="289" y="561" width="7" height="2" fill="#7c0000"/><rect x="290" y="561" width="5" height="2" fill="#ff0000"/><rect x="291" y="561" width="3" height="2" fill="#ff66cc"/>
<rect x="332" y="584" width="1" height="4" fill="#ff2020"/><rect x="329" y="584" width="7" height="4" fill="#7c0000"/><rect x="330" y="584" width="5" height="4" fill="#ff0000"/><rect x="331" y="584" width="3" height="4" fill="#ff66cc"/>
<rect x="352" y="550" width="1" height="14" fill="#54ffff"/><rect x="349" y="555" width="7" height="3" fill="#7c0000"/><rect x="350" y="555" width="5" height="3" fill="#ff0000"/><rect x="351" y="555" width="3" height="3" fill="#ff66cc"/>
<rect x="392" y="538" width="1" height="12" fill="#ff2020"/><rect x="389" y="542" width="7" height="7" fill="#7c0000"/><rect x="390" y="542" width="5" height="7" fill="#ff0000"/><rect x="391" y="542" width="3" height="7" fill="#ff66cc"/>
<rect x="425" y="525" width="1" height="20" fill="#ff2020"/><rect x="422" y="528" width="7" height="17" fill="#7c0000"/><rect x="423" y="528" width="5" height="17" fill="#ff0000"/><rect x="424" y="528" width="3" height="17" fill="#ff66cc"/>
<rect x="498" y="501" width="1" height="28" fill="#ff2020"/><rect x="495" y="504" width="7" height="19" fill="#7c0000"/><rect x="496" y="504" width="5" height="19" fill="#ff0000"/><rect x="497" y="504" width="3" height="19" fill="#ff66cc"/>
<rect x="511" y="443" width="1" height="40" fill="#ff2020"/><rect x="508" y="443" width="7" height="35" fill="#7c0000"/><rect x="509" y="443" width="5" height="35" fill="#ff0000"/><rect x="510" y="443" width="3" height="35" fill="#ff66cc"/>
<rect x="524" y="402" width="1" height="77" fill="#ff2020"/><rect x="521" y="425" width="7" height="54" fill="#7c0000"/><rect x="522" y="425" width="5" height="54" fill="#ff0000"/><rect x="523" y="425" width="3" height="54" fill="#ff66cc"/>
<rect x="538" y="376" width="1" height="63" fill="#54ffff"/><rect x="535" y="396" width="7" height="40" fill="#7c0000"/><rect x="536" y="396" width="5" height="40" fill="#ff0000"/><rect x="537" y="396" width="3" height="40" fill="#ff66cc"/>
<rect x="604" y="463" width="1" height="27" fill="#ff2020"/><rect x="601" y="468" width="7" height="18" fill="#7c0000"/><rect x="602" y="468" width="5" height="18" fill="#ff0000"/><rect x="603" y="468" width="3" height="18" fill="#ff66cc"/>
<rect x="756" y="513" width="1" height="12" fill="#ff2020"/><rect x="753" y="521" width="7" height="3" fill="#7c0000"/><rect x="754" y="521" width="5" height="3" fill="#ff0000"/><rect x="755" y="521" width="3" height="3" fill="#ff66cc"/>
<rect x="823" y="528" width="1" height="10" fill="#ff2020"/><rect x="820" y="528" width="7" height="8" fill="#7c0000"/><rect x="821" y="528" width="5" height="8" fill="#ff0000"/><rect x="822" y="528" width="3" height="8" fill="#ff66cc"/>
<rect x="856" y="469" width="1" height="36" fill="#ff2020"/><rect x="853" y="489" width="7" height="16" fill="#7c0000"/><rect x="854" y="489" width="5" height="16" fill="#ff0000"/><rect x="855" y="489" width="3" height="16" fill="#ff66cc"/>
<rect x="896" y="493" width="1" height="8" fill="#ff2020"/><rect x="893" y="493" width="7" height="8" fill="#7c0000"/><rect x="894" y="493" width="5" height="8" fill="#ff0000"/><rect x="895" y="493" width="3" height="8" fill="#ff66cc"/>
<rect x="935" y="493" width="1" height="9" fill="#ff2020"/><rect x="932" y="493" width="7" height="9" fill="#7c0000"/><rect x="933" y="493" width="5" height="9" fill="#ff0000"/><rect x="934" y="493" width="3" height="9" fill="#ff66cc"/>
<rect x="982" y="456" width="1" height="18" fill="#ff2020"/><rect x="979" y="465" width="7" height="9" fill="#7c0000"/><rect x="980" y="465" width="5" height="9" fill="#ff0000"/><rect x="981" y="465" width="3" height="9" fill="#ff66cc"/>
<rect x="1008" y="404" width="1" height="54" fill="#ff2020"/><rect x="1005" y="432" width="7" height="26" fill="#7c0000"/><rect x="1006" y="432" width="5" height="26" fill="#ff0000"/><rect x="1007" y="432" width="3" height="26" fill="#ff66cc"/>
<rect x="1042" y="476" width="1" height="7" fill="#ff2020"/><rect x="1039" y="476" width="7" height="7" fill="#7c0000"/><rect x="1040" y="476" width="5" height="7" fill="#ff0000"/><rect x="1041" y="476" width="3" height="7" fill="#ff66cc"/>
<rect x="1088" y="455" width="1" height="54" fill="#ff2020"/><rect x="1085" y="455" width="7" height="53" fill="#7c0000"/><rect x="1086" y="455" width="5" height="53" fill="#ff0000"/><rect x="1087" y="455" width="3" height="53" fill="#ff66cc"/>
<rect x="1101" y="408" width="1" height="60" fill="#ff2020"/><rect x="1098" y="422" width="7" height="26" fill="#7c0000"/><rect x="1099" y="422" width="5" height="26" fill="#ff0000"/><rect x="1100" y="422" width="3" height="26" fill="#ff66cc"/>
<rect x="1108" y="345" width="1" height="99" fill="#ff2020"/><rect x="1105" y="345" width="7" height="80" fill="#7c0000"/><rect x="1106" y="345" width="5" height="80" fill="#ff0000"/><rect x="1107" y="345" width="3" height="80" fill="#ff66cc"/>
<rect x="1115" y="246" width="1" height="63" fill="#ff2020"/><rect x="1112" y="246" width="7" height="53" fill="#7c0000"/><rect x="1113" y="246" width="5" height="53" fill="#ff0000"/><rect x="1114" y="246" width="3" height="53" fill="#ff66cc"/>
<rect x="1141" y="283" width="1" height="65" fill="#ff2020"/><rect x="1138" y="302" width="7" height="46" fill="#7c0000"/><rect x="1139" y="302" width="5" height="46" fill="#ff0000"/><rect x="1140" y="302" width="3" height="46" fill="#ff66cc"/>
<rect x="1168" y="305" width="1" height="55" fill="#ff2020"/><rect x="1165" y="338" width="7" height="21" fill="#7c0000"/><rect x="1166" y="338" width="5" height="21" fill="#ff0000"/><rect x="1167" y="338" width="3" height="21" fill="#ff66cc"/>
<rect x="1207" y="393" width="1" height="8" fill="#ff2020"/><rect x="1204" y="393" width="7" height="3" fill="#7c0000"/><rect x="1205" y="393" width="5" height="3" fill="#ff0000"/><rect x="1206" y="393" width="3" height="3" fill="#ff66cc"/>
<rect x="1247" y="249" width="1" height="71" fill="#ff2020"/><rect x="1244" y="279" width="7" height="29" fill="#7c0000"/><rect x="1245" y="279" width="5" height="29" fill="#ff0000"/><rect x="1246" y="279" width="3" height="29" fill="#ff66cc"/>
<rect x="1254" y="160" width="1" height="144" fill="#ff2020"/><rect x="1251" y="160" width="7" height="134" fill="#7c0000"/><rect x="1252" y="160" width="5" height="134" fill="#ff0000"/><rect x="1253" y="160" width="3" height="134" fill="#ff66cc"/>
<rect x="1320" y="234" width="1" height="37" fill="#ff2020"/><rect x="1317" y="261" width="7" height="10" fill="#7c0000"/><rect x="1318" y="261" width="5" height="10" fill="#ff0000"/><rect x="1319" y="261" width="3" height="10" fill="#ff66cc"/>
<rect x="1373" y="119" width="1" height="134" fill="#ff2020"/><rect x="1370" y="130" width="7" height="117" fill="#7c0000"/><rect x="1371" y="130" width="5" height="117" fill="#ff0000"/><rect x="1372" y="130" width="3" height="117" fill="#ff66cc"/>
</g>
<g shape-rendering="crispEdges"><rect x="5" y="593" width="3" height="1" fill="#0a5cff"/><rect x="21" y="593" width="1" height="1" fill="#fff"/><rect x="27" y="593" width="1" height="1" fill="#54ffff"/><rect x="32" y="597" width="7" height="1" fill="#54ffff"/><rect x="118" y="602" width="3" height="1" fill="#54ffff"/><rect x="120" y="603" width="1" height="1" fill="#54ffff"/><rect x="125" y="603" width="2" height="1" fill="#54ffff"/><rect x="131" y="604" width="2" height="1" fill="#54ffff"/><rect x="140" y="605" width="1" height="1" fill="#54ffff"/><rect x="145" y="605" width="4" height="1" fill="#ff3030"/><rect x="158" y="601" width="5" height="1" fill="#ff3030"/><rect x="166" y="600" width="3" height="2" fill="#54ffff"/><rect x="172" y="600" width="3" height="2" fill="#54ffff"/><rect x="258" y="603" width="4" height="1" fill="#ff3030"/><rect x="266" y="601" width="1" height="2" fill="#54ffff"/><rect x="264" y="603" width="5" height="1" fill="#54ffff"/><rect x="271" y="602" width="4" height="1" fill="#ff3030"/></g>
<path d="M1260.5 27.5 l3 -1.5 m-3 1.5 l2 2.5 m-2 -2.5 l4 .8 m2 .6 l3.5 1.2" stroke="#d0d0d0" stroke-width="1" fill="none"/>
<text x="1274" y="36" font-family="'Liberation Sans','Noto Sans CJK SC',sans-serif" font-size="12" fill="#c8c8c8">48.77</text>
<path d="M220.5 607.5 l2.2 -2 m-2.2 2 l3.2 3.6 m-3.2 -3.6 h10" stroke="#b0b0b0" stroke-width="1" fill="none"/>
<text x="233.5" y="610.8" font-family="'Liberation Sans','Noto Sans CJK SC',sans-serif" font-size="12" fill="#b0b0b0">5.16</text>
<clipPath id="mc"><rect x="0" y="4" width="1410" height="630"/></clipPath>
<g font-family="'Liberation Sans','Noto Sans CJK SC',sans-serif" font-size="12" fill="#ffff00" clip-path="url(#mc)">
<path d="M306.6 586.5 l-7 -6.5 m0 0 l3.5 .3 m-3.5 -.3 l.3 3.5" stroke="#ffff00" stroke-width="1.2" fill="none"/>
<text x="307.6" y="587.3">涨停</text>
<path d="M300.7 601.5 l-7 -6.5 m0 0 l3.5 .3 m-3.5 -.3 l.3 3.5" stroke="#ffff00" stroke-width="1.2" fill="none"/>
<text x="301.7" y="602.3">涨停</text>
<path d="M366.6 572.9 l-7 -6.5 m0 0 l3.5 .3 m-3.5 -.3 l.3 3.5" stroke="#ffff00" stroke-width="1.2" fill="none"/>
<text x="367.6" y="573.7">涨停</text>
<path d="M440.0 554.3 l-7 -6.5 m0 0 l3.5 .3 m-3.5 -.3 l.3 3.5" stroke="#ffff00" stroke-width="1.2" fill="none"/>
<text x="441.0" y="555.1">涨停</text>
<path d="M512.4 539.5 l-7 -6.5 m0 0 l3.5 .3 m-3.5 -.3 l.3 3.5" stroke="#ffff00" stroke-width="1.2" fill="none"/>
<text x="513.4" y="540.3">涨停</text>
<path d="M525.9 496.4 l-7 -6.5 m0 0 l3.5 .3 m-3.5 -.3 l.3 3.5" stroke="#ffff00" stroke-width="1.2" fill="none"/>
<text x="526.9" y="497.2">涨停</text>
<path d="M539.4 491.3 l-7 -6.5 m0 0 l3.5 .3 m-3.5 -.3 l.3 3.5" stroke="#ffff00" stroke-width="1.2" fill="none"/>
<text x="540.4" y="492.1">涨停</text>
<path d="M870.0 516.8 l-7 -6.5 m0 0 l3.5 .3 m-3.5 -.3 l.3 3.5" stroke="#ffff00" stroke-width="1.2" fill="none"/>
<text x="871.0" y="517.6">涨停</text>
<path d="M1022.9 477.9 l-7 -6.5 m0 0 l3.5 .3 m-3.5 -.3 l.3 3.5" stroke="#ffff00" stroke-width="1.2" fill="none"/>
<text x="1023.9" y="478.7">涨停</text>
<path d="M1122.0 461.5 l-7 -6.5 m0 0 l3.5 .3 m-3.5 -.3 l.3 3.5" stroke="#ffff00" stroke-width="1.2" fill="none"/>
<text x="1123.0" y="462.3">涨停</text>
<path d="M1115.3 482.1 l-7 -6.5 m0 0 l3.5 .3 m-3.5 -.3 l.3 3.5" stroke="#ffff00" stroke-width="1.2" fill="none"/>
<text x="1116.3" y="482.9">涨停</text>
<path d="M1102.6 521.5 l-7 -6.5 m0 0 l3.5 .3 m-3.5 -.3 l.3 3.5" stroke="#ffff00" stroke-width="1.2" fill="none"/>
<text x="1103.6" y="522.3">涨停</text>
<path d="M1129.7 331.7 l-7 -6.5 m0 0 l3.5 .3 m-3.5 -.3 l.3 3.5" stroke="#ffff00" stroke-width="1.2" fill="none"/>
<text x="1130.7" y="332.5">涨停</text>
<path d="M1155.9 366.3 l-7 -6.5 m0 0 l3.5 .3 m-3.5 -.3 l.3 3.5" stroke="#ffff00" stroke-width="1.2" fill="none"/>
<text x="1156.9" y="367.1">涨停</text>
<path d="M1183.5 379.0 l-7 -6.5 m0 0 l3.5 .3 m-3.5 -.3 l.3 3.5" stroke="#ffff00" stroke-width="1.2" fill="none"/>
<text x="1184.5" y="379.8">涨停</text>
<path d="M1269.1 327.5 l-7 -6.5 m0 0 l3.5 .3 m-3.5 -.3 l.3 3.5" stroke="#ffff00" stroke-width="1.2" fill="none"/>
<text x="1270.1" y="328.3">涨停</text>
<path d="M1262.4 341.3 l-7 -6.5 m0 0 l3.5 .3 m-3.5 -.3 l.3 3.5" stroke="#ffff00" stroke-width="1.2" fill="none"/>
<text x="1263.4" y="342.1">涨停</text>
<path d="M1387.0 277.0 l-7 -6.5 m0 0 l3.5 .3 m-3.5 -.3 l.3 3.5" stroke="#ffff00" stroke-width="1.2" fill="none"/>
<text x="1388.0" y="277.8">涨停</text>
</g>
<rect x="1247" y="620" width="13" height="13" fill="#8b0000"/>
<text x="1248" y="630.5" font-family="'Liberation Sans','Noto Sans CJK SC',sans-serif" font-size="11" fill="#fff">涨</text>
<rect x="2" y="660" width="1405" height="2" fill="#008000" shape-rendering="crispEdges"/>
<g fill="#ff0000" shape-rendering="crispEdges">
<rect x="58" y="786" width="5" height="7"/>
<rect x="65" y="786" width="5" height="11"/>
<rect x="71" y="786" width="5" height="13"/>
<rect x="78" y="786" width="5" height="20"/>
<rect x="85" y="786" width="5" height="26"/>
<rect x="91" y="786" width="5" height="28"/>
<rect x="98" y="786" width="5" height="32"/>
<rect x="104" y="786" width="5" height="35"/>
<rect x="111" y="786" width="5" height="36"/>
<rect x="118" y="786" width="5" height="37"/>
<rect x="124" y="786" width="5" height="38"/>
<rect x="131" y="786" width="5" height="36"/>
<rect x="138" y="786" width="5" height="38"/>
<rect x="144" y="786" width="5" height="31"/>
<rect x="151" y="786" width="5" height="18"/>
<rect x="595" y="786" width="5" height="2"/>
<rect x="602" y="786" width="5" height="7"/>
<rect x="608" y="786" width="5" height="12"/>
<rect x="615" y="786" width="5" height="16"/>
<rect x="622" y="786" width="5" height="23"/>
<rect x="628" y="786" width="5" height="28"/>
<rect x="635" y="786" width="5" height="24"/>
<rect x="642" y="786" width="5" height="22"/>
<rect x="648" y="786" width="5" height="25"/>
<rect x="655" y="786" width="5" height="30"/>
<rect x="662" y="786" width="5" height="36"/>
<rect x="668" y="786" width="5" height="39"/>
<rect x="675" y="786" width="5" height="42"/>
<rect x="681" y="786" width="5" height="44"/>
<rect x="688" y="786" width="5" height="44"/>
<rect x="695" y="786" width="5" height="44"/>
<rect x="701" y="786" width="5" height="39"/>
<rect x="708" y="786" width="5" height="22"/>
<rect x="1053" y="786" width="5" height="7"/>
<rect x="1059" y="786" width="5" height="17"/>
<rect x="1066" y="786" width="5" height="26"/>
<rect x="1073" y="786" width="5" height="32"/>
<rect x="1079" y="786" width="5" height="36"/>
<rect x="1199" y="786" width="5" height="8"/>
<rect x="1205" y="786" width="5" height="17"/>
<rect x="1212" y="786" width="5" height="17"/>
<rect x="1219" y="786" width="5" height="10"/>
<rect x="1225" y="786" width="5" height="5"/>
</g>
<rect x="2" y="784" width="1405" height="2" fill="#ffff00" shape-rendering="crispEdges"/>
<path d="M987 658h2v2h-2z M990 658h2v2h-2z M993 657h5v3h-5z M1000 658h2v2h-2z M1003 658h2v2h-2z" fill="#00ff00" shape-rendering="crispEdges"/>
<polyline fill="none" stroke="#ff00ff" stroke-width="1" shape-rendering="crispEdges" points="0.0,723.8 6.2,726.2 13.8,725.0 20.0,731.2 27.5,740.0 35.0,757.5 42.5,770.0 50.0,777.5 56.2,783.8 60.0,792.5 65.0,796.2 73.8,798.8 80.0,805.0 86.2,812.0 93.8,813.8 100.0,817.5 106.2,820.8 112.5,822.0 122.5,823.0 127.5,824.2 132.5,821.8 140.0,824.5 145.0,818.8 150.0,812.5 155.0,800.0 158.8,785.0 163.8,775.0 168.8,765.0 173.8,756.2 181.2,756.2 186.2,754.2 191.2,762.5 196.2,772.5 200.0,780.0 206.2,779.2 212.5,786.2 221.2,786.2 225.0,782.5 232.5,778.8 240.0,773.8 246.2,772.5 253.8,765.0 258.8,745.0 266.2,731.2 272.5,712.5 278.8,695.0 285.0,682.5 292.5,672.0 297.5,680.0 305.0,692.5 311.2,707.5 318.8,721.2 326.2,728.8 332.5,733.0 338.8,732.5 346.2,723.8 350.0,715.0 355.0,702.5 362.5,692.5 371.2,676.2 378.8,678.8 386.2,671.2 392.5,663.8 400.0,663.0 406.2,671.2 412.5,682.5 418.8,685.5 426.2,675.0 433.8,671.2 440.0,674.5 447.5,685.0 457.5,696.8 465.0,697.5 471.2,706.2 478.8,711.2 485.0,715.0 491.2,723.8 498.8,713.8 505.0,701.2 511.2,681.2 518.8,688.8 526.2,681.2 532.5,679.2 540.0,683.0 550.0,697.5 558.8,699.5 566.2,711.2 572.5,718.8 578.8,731.2 585.0,757.5 591.2,775.0 596.2,787.5 602.5,791.2 610.0,797.5 617.5,802.5 623.8,808.8 631.2,815.0 637.5,810.5 645.0,808.2 652.5,812.5 660.0,817.0 667.5,824.5 675.0,826.8 683.8,830.5 690.0,830.5 698.8,830.5 705.0,823.8 710.0,810.0 715.0,792.5 718.8,780.0 725.0,755.0 731.2,739.5 737.5,741.2 743.8,756.2 750.0,747.5 756.2,732.5 762.5,717.5 770.0,706.2 777.5,701.2 783.8,696.2 790.0,703.8 797.5,716.2 805.0,730.0 811.2,742.5 816.2,758.8 822.5,761.2 828.8,750.0 835.0,730.0 842.5,705.0 848.8,685.0 856.2,681.2 863.8,685.0 870.0,683.8 876.2,691.2 883.8,697.5 890.0,701.2 896.2,700.5 902.5,707.5 910.0,722.5 917.5,736.2 923.8,747.5 929.5,761.2 936.2,752.5 941.2,727.5 947.5,705.0 955.0,690.0 962.5,685.0 968.8,673.8 975.0,670.0 982.5,666.2 988.8,659.5 995.0,656.2 1001.2,657.5 1008.8,663.8 1013.8,677.5 1018.8,700.0 1023.8,725.0 1028.8,747.5 1035.0,762.5 1040.0,772.5 1045.0,777.5 1052.9,787.6 1059.5,800.8 1067.4,811.4 1074.0,816.7 1082.0,822.5 1084.6,806.1 1088.6,785.0 1095.2,755.9 1101.8,724.2 1108.4,700.5 1115.0,682.0 1121.6,679.3 1128.2,682.0 1133.5,691.2 1141.4,692.5 1149.3,697.8 1154.6,708.4 1161.2,716.3 1167.8,721.6 1174.4,732.1 1182.3,746.7 1188.9,765.2 1195.5,781.0 1200.8,792.9 1206.1,802.9 1215.3,802.9 1221.9,795.5 1228.5,790.2 1235.1,783.6 1241.7,758.6 1248.3,732.1 1253.6,711.0 1260.2,706.5 1266.8,711.0 1274.8,717.6 1282.7,726.9 1291.9,740.1 1299.8,752.0 1307.8,759.9 1314.4,765.2 1321.0,771.8 1327.6,777.0 1332.8,784.2 1338.1,770.4 1346.1,750.6 1352.7,742.7 1360.6,738.7 1365.9,732.1 1372.5,709.7 1379.9,706.3 1385.7,713.1 1393.6,718.9 1400.2,726.9 1405.5,730.3"/>
<g font-family="'Noto Sans CJK SC',sans-serif" font-weight="900" font-size="39.5" stroke-linejoin="round" stroke-linecap="round">
<text x="17.0" y="86.5" fill="url(#og)" stroke="url(#og)" stroke-width="4.2">股</text>
<text x="58.8" y="86.5" fill="url(#og)" stroke="url(#og)" stroke-width="4.2">海</text>
<text x="100.6" y="86.5" fill="url(#og)" stroke="url(#og)" stroke-width="4.2">飞</text>
<text x="142.4" y="86.5" fill="url(#og)" stroke="url(#og)" stroke-width="4.2">虹</text>
<text x="17.0" y="86.5" fill="#0a0402" stroke="#0a0402" stroke-width="1">股</text>
<text x="58.8" y="86.5" fill="#0a0402" stroke="#0a0402" stroke-width="1">海</text>
<text x="100.6" y="86.5" fill="#0a0402" stroke="#0a0402" stroke-width="1">飞</text>
<text x="142.4" y="86.5" fill="#0a0402" stroke="#0a0402" stroke-width="1">虹</text>
</g>
<polygon fill="url(#ar)" points="0.0,268.3 14.4,257.0 34.9,274.5 75.6,225.2 97.2,250.3 139.5,185.2 167.4,218.3 216.3,138.0 205.8,131.0 240.7,106.6 241.9,146.2 230.2,142.7 172.1,241.5 166.3,241.0 140.7,206.6 102.3,270.6 97.7,269.4 75.6,243.8 40.7,288.0 34.9,289.2 14.4,268.3 0.0,281.0"/>
<path d="M14.4 257 L34.9 274.5 L34.9 278 L14.4 261z M75.6 225.2 L97.2 250.3 L97.2 254 L75.6 229z M139.5 185.2 L167.4 218.3 L167.4 222 L139.5 189.5z" fill="#ff7a7a" opacity=".8"/>
<path d="M240.7 106.6 L241.9 146.2 L239.5 145.5 L238.5 110z" fill="#ffd0d0" opacity=".9"/>
<path d="M34.9 289.2 L40.7 288 L75.6 243.8 L75.6 240 z M97.7 269.4 L102.3 270.6 L140.7 206.6 L139.5 203z M166.3 241 L172.1 241.5 L230.2 142.7 L226 141.5z" fill="#a80c14" opacity=".75"/>
<g transform="translate(50 110) scale(0.12206)">
<polygon fill="#f6c890" points="720,457 710,458 698,459 683,461 667,463 650,465 633,468 616,471 599,473 583,475 565,477 546,480 527,482 509,484 493,486 480,487 470,490 470,490 480,491 494,490 510,490 528,489 547,487 566,486 584,484 601,483 617,481 634,479 652,476 669,473 685,470 699,468 711,465 720,463"/>
<polygon fill="#e8404a" points="697,462 689,465 678,468 666,473 652,477 637,482 623,487 609,491 597,494 586,497 576,499 567,501 558,502 548,503 539,504 529,505 519,506 508,506 496,506 484,506 471,506 458,506 445,506 432,506 420,506 408,507 396,507 384,507 372,507 360,507 349,509 337,511 326,514 316,519 306,524 298,531 290,538 283,545 277,551 271,557 264,562 258,567 251,573 246,578 240,583 235,587 230,590 225,592 220,593 214,593 206,591 198,589 189,585 181,581 173,578 166,575 160,575 160,575 164,579 169,584 177,589 185,594 193,598 202,603 211,606 220,607 228,606 236,604 243,600 250,596 256,592 263,587 269,582 276,578 283,572 290,566 298,560 305,554 312,548 319,543 326,539 334,536 342,534 352,533 362,532 373,532 384,533 396,533 408,534 420,534 432,534 445,534 457,535 470,535 483,536 496,535 509,535 521,534 532,533 543,531 553,529 562,527 572,525 582,522 592,519 603,516 616,512 629,507 644,501 658,496 672,490 685,485 695,481 703,478"/>
<polygon fill="#f4a060" points="685,472 674,477 660,485 643,495 625,506 605,517 586,528 568,537 552,545 538,552 524,558 511,564 498,570 485,575 472,580 459,585 445,590 431,595 416,600 402,605 387,610 373,614 358,617 344,619 330,621 315,621 299,620 281,618 264,615 248,612 233,610 220,608 210,610 210,610 218,616 230,620 245,625 261,630 278,635 296,639 313,642 330,643 346,643 362,641 378,639 394,636 410,632 425,628 440,624 455,620 469,616 483,611 497,607 511,602 525,597 539,590 553,583 568,575 584,565 602,554 621,541 639,529 657,516 673,505 686,496 695,488"/>
<polygon fill="#f29060" points="663,484 651,493 635,506 616,521 595,538 572,555 551,571 530,586 512,598 496,607 480,615 465,622 450,628 436,634 422,639 408,643 394,648 381,652 369,655 357,657 345,660 332,662 320,665 307,669 294,674 281,680 268,686 256,693 244,701 233,708 222,715 212,721 203,727 193,733 185,738 178,743 171,748 165,752 159,756 154,758 148,760 142,761 135,761 127,761 120,761 113,759 106,758 100,755 95,753 91,750 86,745 81,738 77,732 73,725 69,718 65,713 60,710 60,710 59,715 61,722 63,729 66,737 69,745 74,753 79,761 85,767 92,772 99,776 107,779 116,782 125,783 134,784 143,785 152,784 161,782 170,779 178,776 185,772 193,767 201,762 209,758 217,753 228,748 238,742 249,735 261,729 272,722 284,716 295,711 306,706 317,703 328,700 339,698 352,696 364,694 378,691 392,687 406,682 420,676 434,671 448,665 463,658 479,651 495,643 511,633 528,622 547,609 567,593 589,575 610,557 631,540 650,524 665,510 677,500"/>
<polygon fill="#e0343e" points="645,494 636,501 624,510 610,521 594,533 577,546 561,559 546,571 533,582 521,591 511,600 501,609 492,617 483,626 475,634 467,643 460,653 454,663 448,673 444,683 440,692 437,701 433,709 428,716 423,723 416,729 408,736 398,742 388,748 378,753 368,758 357,764 347,768 337,773 326,777 315,782 304,785 293,789 283,793 275,796 270,800 270,800 277,801 285,799 295,798 306,795 318,792 330,789 342,786 353,782 363,777 374,773 385,768 397,763 408,757 418,751 428,745 437,737 445,729 451,720 457,710 461,701 465,692 469,683 474,675 480,667 487,660 494,652 502,644 509,635 518,627 527,618 537,608 547,598 560,587 574,575 589,561 605,548 621,535 634,523 646,513 655,506"/>
<polygon fill="#e0343e" points="615,519 613,524 611,531 609,539 606,547 603,556 600,565 597,573 594,581 588,588 581,596 572,604 563,612 554,620 545,627 539,634 535,640 535,640 542,638 550,633 559,628 570,621 580,614 590,606 599,598 606,589 612,581 617,571 620,561 622,551 623,542 624,533 625,526 625,521"/>
<path d="M720 500 Q715 540 700 555 M782 510 Q780 560 760 575" stroke="#e2402c" stroke-width="11" fill="none" stroke-linecap="round"/>
<path d="M430 70 C440 150 520 220 590 240 L740 270 L880 385 L760 432 L700 442 L660 415 L630 412 L600 385 L560 378 L535 350 L490 328 L475 300 L440 268 L440 240 L413 202 L425 175 L405 137 L425 115 Z" fill="url(#wg)"/>
<path d="M590 240 L745 270 L895 380 L800 425 L700 402 L640 340 Z" fill="#d82820"/>
<path d="M745 270 L895 380 L840 395 L720 300 Z" fill="#c81818"/>
<path d="M800 100 Q785 170 830 225 L905 250 L880 335 L898 378 L850 365 L800 320 L750 260 L735 215 L765 160 Z" fill="#fbe6b8"/>
<path d="M700 440 L850 398 L905 372 Q960 340 990 290 Q1015 240 1050 235 L1125 243 L1072 266 Q1022 296 995 370 Q960 440 880 482 L770 492 L685 472 Z" fill="#e6382c"/>
<path d="M880 345 Q950 330 1000 270 Q1020 240 1050 236 L1080 250 Q1010 280 985 350 Q960 400 900 420 Z" fill="#f6b860"/>
<path d="M1075 240 L1127 243 L1078 258 Z" fill="#f0a040"/>
<path d="M1025 225 Q990 200 960 195 M1015 232 Q970 215 930 210 M1005 245 Q965 250 940 258" stroke="#f0c080" stroke-width="6" fill="none"/>
</g>
<g font-family="'Liberation Sans','Noto Sans CJK SC',sans-serif" font-size="12">
<text x="1.0" y="17.3" fill="#d8d8d8">华光源海 (日线.前复权)</text>
<circle cx="134" cy="13" r="5.6" fill="#7a7a7a"/><path d="M131 11.8 l3 3 l3 -3" stroke="#111" stroke-width="1.4" fill="none"/>
<text x="144.7" y="17.3" fill="#d8d8d8">高抛低吸主图</text>
<text x="220.8" y="17.3" fill="#ffffff">牛熊: 9.70</text>
<text x="282.0" y="17.3" fill="#ffff00">中线趋势线: 10.68</text>
<text x="384.0" y="17.3" fill="#0a5cff">下跌: -</text>
<text x="425.0" y="17.3" fill="#ff0000">短期趋势: 11.74</text>
<text x="422.5" y="38.5" fill="#ff0000" textLength="146.5" lengthAdjust="spacing">【红带持股-----蓝线持币】</text>
<text x="1101" y="43.5" fill="#ffffff" font-size="13" textLength="104" lengthAdjust="spacingAndGlyphs">2025 年 11 月 4 日</text>
<circle cx="5.7" cy="643" r="5.6" fill="#7a7a7a"/><path d="M2.7 641.8 l3 3 l3 -3" stroke="#111" stroke-width="1.4" fill="none"/>
<text x="16.0" y="646.9" fill="#d8d8d8">高抛低吸副图</text>
<text x="93.5" y="646.9" fill="#ffff00">成本区: 50.00</text>
<text x="172.5" y="646.9" fill="#ffff00">底部吸筹: 0.00</text>
<text x="256.0" y="646.9" fill="#008000">获利区: 160.00</text>
<text x="342.0" y="646.9" fill="#ff00ff">操盘线: 71.08</text>
<text x="421.5" y="646.9" fill="#ffff00">金钻买点: 1.00</text>
<text x="505.0" y="646.9" fill="#ff0000">筹码统计: 193.80</text>
<path d="M1382.5 7.5 l5.5 5.5 l-5.5 5.5 l-5.5 -5.5 z" fill="none" stroke="#8a8a8a" stroke-width="1"/>
<rect x="1395.5" y="8.5" width="11" height="10" rx="2" fill="none" stroke="#9a9a9a" stroke-width="1.2"/><rect x="1401.5" y="10.5" width="3" height="6" fill="#9a9a9a"/>
<text x="2.0" y="857.5" fill="#8c8c8c">2024年</text>
<text x="168.0" y="857.5" fill="#8c8c8c">9</text>
<text x="293.0" y="857.5" fill="#8c8c8c">10</text>
<text x="413.5" y="857.5" fill="#8c8c8c">11</text>
<text x="552.5" y="857.5" fill="#8c8c8c">12</text>
<text x="698.5" y="857.5" fill="#8c8c8c">1</text>
<text x="938.0" y="857.5" fill="#8c8c8c">3</text>
<text x="1076.0" y="857.5" fill="#8c8c8c">4</text>
<text x="1215.0" y="857.5" fill="#8c8c8c">5</text>
<text x="1341.0" y="857.5" fill="#8c8c8c">6</text>
<rect x="725" y="846" width="210" height="14" fill="#000080"/>
<text x="726.0" y="857.5" fill="#e0e0ff" textLength="207.5" lengthAdjust="spacingAndGlyphs">2025/01/08/三 198 至今涨幅139.61%</text>
<rect x="1413" y="829" width="7" height="15" fill="#000080"/>
<text x="1413.0" y="841.0" fill="#e0e0ff">-2</text>
<text x="731.0" y="755.5" fill="#ffff00">&lt;--金钻买点</text>
</g>
<g transform="translate(161.1 794.0)"><path d="M-8 -3.2 L-5 -6 L5 -6 L8 -3.2 L0 6 Z" fill="url(#dm)"/><path d="M-5.5 -3.6 Q0 -6 5.5 -3.6 Q0 -4.6 -5.5 -3.6Z" fill="#fff4d8" opacity=".9"/><path d="M-8 -3.2 L-5 -6 L5 -6 L8 -3.2" stroke="#ffe6b0" stroke-width=".9" fill="none"/><path d="M-0.6 -2 L0 5" stroke="#ffd890" stroke-width=".8"/></g>
<g transform="translate(1089.1 794.0)"><path d="M-8 -3.2 L-5 -6 L5 -6 L8 -3.2 L0 6 Z" fill="url(#dm)"/><path d="M-5.5 -3.6 Q0 -6 5.5 -3.6 Q0 -4.6 -5.5 -3.6Z" fill="#fff4d8" opacity=".9"/><path d="M-8 -3.2 L-5 -6 L5 -6 L8 -3.2" stroke="#ffe6b0" stroke-width=".9" fill="none"/><path d="M-0.6 -2 L0 5" stroke="#ffd890" stroke-width=".8"/></g>
<g transform="translate(1241.5 794.0)"><path d="M-8 -3.2 L-5 -6 L5 -6 L8 -3.2 L0 6 Z" fill="url(#dm)"/><path d="M-5.5 -3.6 Q0 -6 5.5 -3.6 Q0 -4.6 -5.5 -3.6Z" fill="#fff4d8" opacity=".9"/><path d="M-8 -3.2 L-5 -6 L5 -6 L8 -3.2" stroke="#ffe6b0" stroke-width=".9" fill="none"/><path d="M-0.6 -2 L0 5" stroke="#ffd890" stroke-width=".8"/></g>
<path d="M724 717.3 l-5.2 5.6 h3.9 v7.5 h2.6 v-7.5 h3.9 z" fill="#ff1010"/>
<g transform="translate(724 735.5)"><path d="M0 0.5 C-1.5 -6.5 -8.5 -7 -7.5 -2.2 C-7.2 0.5 -3 1 0 0.5 C-4.5 2 -6 5.5 -3.2 5.8 C-1 5.8 -0.2 3 0 0.5 C1.5 -6.5 8.5 -7 7.5 -2.2 C7.2 0.5 3 1 0 0.5 C4.5 2 6 5.5 3.2 5.8 C1 5.8 0.2 3 0 0.5Z" fill="#28c0e8" stroke="#90f0ff" stroke-width=".5"/><path d="M0 -3 V4.5" stroke="#503010" stroke-width=".9"/></g>
<g transform="translate(724 747.5)"><path d="M0 0.5 C-1.5 -6.5 -8.5 -7 -7.5 -2.2 C-7.2 0.5 -3 1 0 0.5 C-4.5 2 -6 5.5 -3.2 5.8 C-1 5.8 -0.2 3 0 0.5 C1.5 -6.5 8.5 -7 7.5 -2.2 C7.2 0.5 3 1 0 0.5 C4.5 2 6 5.5 3.2 5.8 C1 5.8 0.2 3 0 0.5Z" fill="#d8a010" stroke="#ffe060" stroke-width=".5"/><path d="M0 -3 V4.5" stroke="#503010" stroke-width=".9"/></g>
<g transform="translate(724 759.0)"><path d="M0 0.5 C-1.5 -6.5 -8.5 -7 -7.5 -2.2 C-7.2 0.5 -3 1 0 0.5 C-4.5 2 -6 5.5 -3.2 5.8 C-1 5.8 -0.2 3 0 0.5 C1.5 -6.5 8.5 -7 7.5 -2.2 C7.2 0.5 3 1 0 0.5 C4.5 2 6 5.5 3.2 5.8 C1 5.8 0.2 3 0 0.5Z" fill="#d83020" stroke="#ff8060" stroke-width=".5"/><path d="M0 -3 V4.5" stroke="#503010" stroke-width=".9"/></g>
<path d="M722.0 765.6 h4 l-.6 1.6 h-2.8z" fill="#f8e8b0"/>
<ellipse cx="724" cy="772.3" rx="6.5" ry="5.2" fill="url(#bag)" stroke="#8a5a20" stroke-width=".7"/>
<text x="724" y="775.4" font-family="'Liberation Sans',sans-serif" font-size="9" font-weight="bold" fill="#7a2a10" text-anchor="middle">$</text>
<path d="M722.0 776.8 h4 l-.6 1.6 h-2.8z" fill="#f8e8b0"/>
<ellipse cx="724" cy="783.5" rx="6.5" ry="5.2" fill="url(#bag)" stroke="#8a5a20" stroke-width=".7"/>
<text x="724" y="786.6" font-family="'Liberation Sans',sans-serif" font-size="9" font-weight="bold" fill="#7a2a10" text-anchor="middle">$</text>
<path d="M722.0 788.1 h4 l-.6 1.6 h-2.8z" fill="#f8e8b0"/>
<ellipse cx="724" cy="794.8" rx="6.5" ry="5.2" fill="url(#bag)" stroke="#8a5a20" stroke-width=".7"/>
<text x="724" y="797.9" font-family="'Liberation Sans',sans-serif" font-size="9" font-weight="bold" fill="#7a2a10" text-anchor="middle">$</text>
<path d="M722.0 799.3 h4 l-.6 1.6 h-2.8z" fill="#f8e8b0"/>
<ellipse cx="724" cy="806.0" rx="6.5" ry="5.2" fill="url(#bag)" stroke="#8a5a20" stroke-width=".7"/>
<text x="724" y="809.1" font-family="'Liberation Sans',sans-serif" font-size="9" font-weight="bold" fill="#7a2a10" text-anchor="middle">$</text>
<path d="M722.0 810.6 h4 l-.6 1.6 h-2.8z" fill="#f8e8b0"/>
<ellipse cx="724" cy="817.3" rx="6.5" ry="5.2" fill="url(#bag)" stroke="#8a5a20" stroke-width=".7"/>
<text x="724" y="820.4" font-family="'Liberation Sans',sans-serif" font-size="9" font-weight="bold" fill="#7a2a10" text-anchor="middle">$</text>
<path d="M722.0 822.3 h4 l-.6 1.6 h-2.8z" fill="#f8e8b0"/>
<ellipse cx="724" cy="829.0" rx="6.5" ry="5.2" fill="url(#bag)" stroke="#8a5a20" stroke-width=".7"/>
<text x="724" y="832.1" font-family="'Liberation Sans',sans-serif" font-size="9" font-weight="bold" fill="#7a2a10" text-anchor="middle">$</text>
<path d="M722.0 833.6 h4 l-.6 1.6 h-2.8z" fill="#f8e8b0"/>
<ellipse cx="724" cy="840.3" rx="6.5" ry="5.2" fill="url(#bag)" stroke="#8a5a20" stroke-width=".7"/>
<text x="724" y="843.4" font-family="'Liberation Sans',sans-serif" font-size="9" font-weight="bold" fill="#7a2a10" text-anchor="middle">$</text>
<g stroke="#e8a848" stroke-width="2.5" fill="none" stroke-linecap="round" stroke-linejoin="round"><circle cx="1009.6" cy="663.4" r="2.2" fill="#f0b458" stroke="none"/><path d="M1009.3 666.2 L1008.3 670 L1004.3 674.6 M1008.3 670 L1013.6 674.4 M1009 667.5 L1013 668.2"/></g>
</svg>
</body></html>
